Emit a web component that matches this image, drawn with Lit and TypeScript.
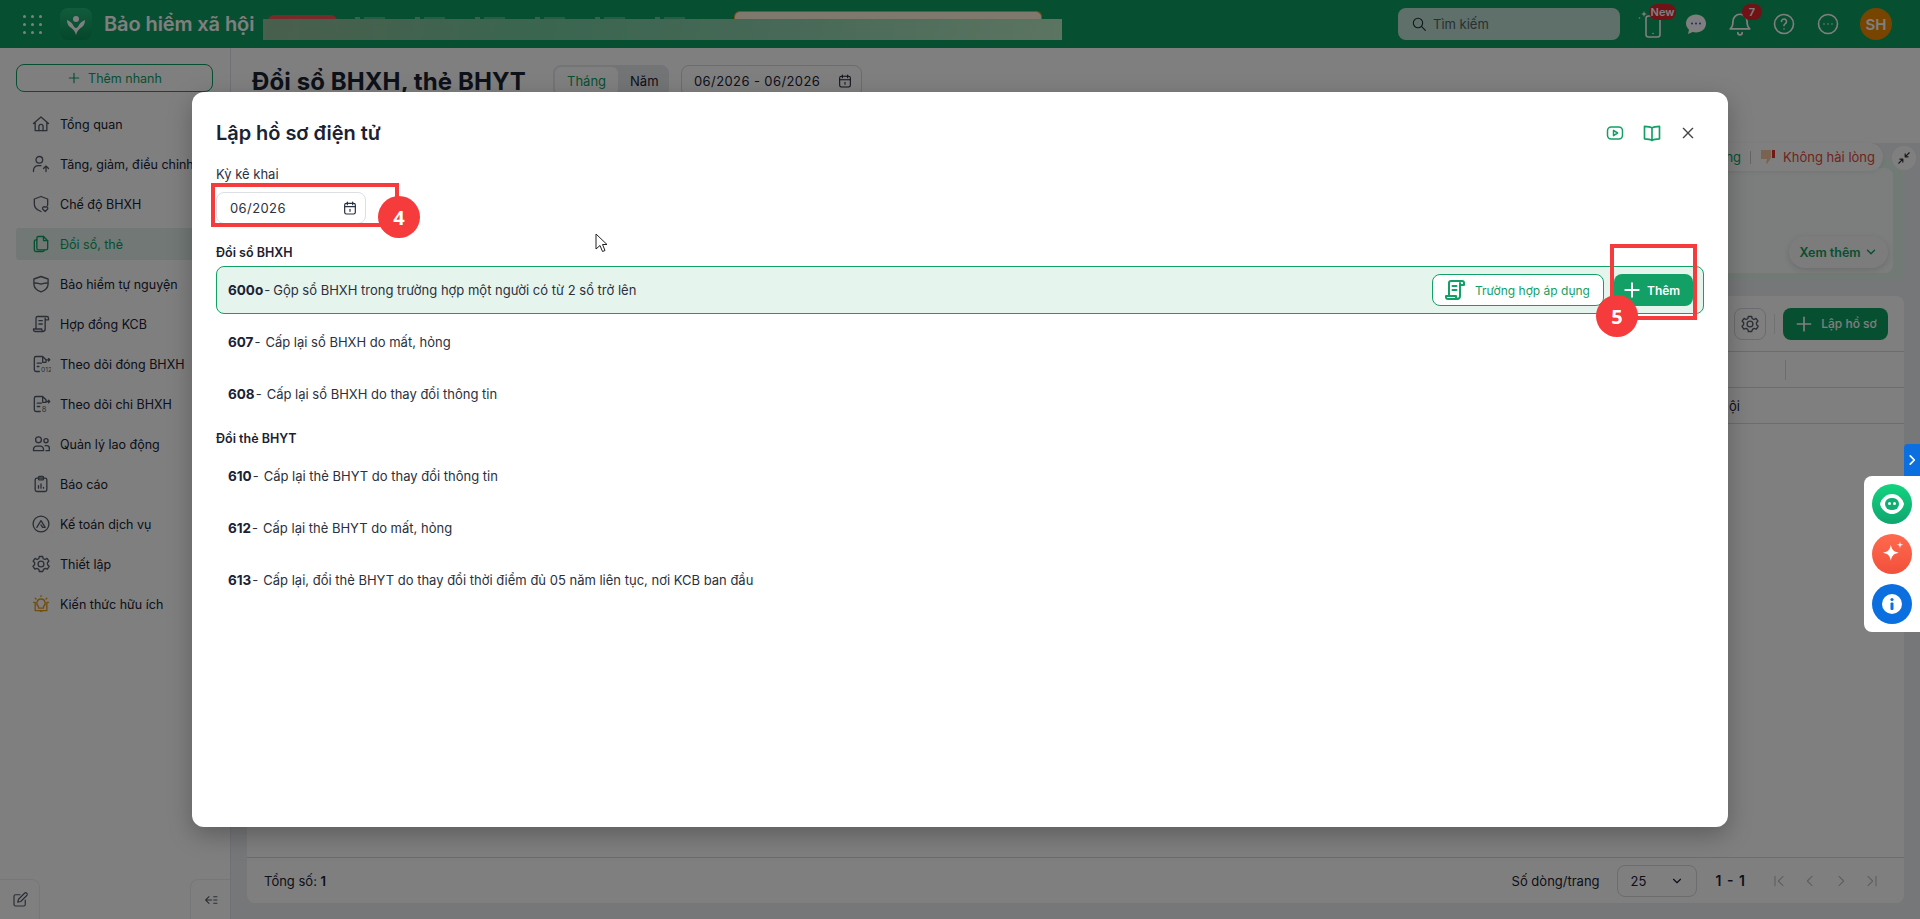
import { LitElement, html, css, svg } from 'lit';
import { customElement } from 'lit/decorators.js';

const i = (body: unknown, size = 20, vb = 24, sw = 1.6) => html`<svg width=${size} height=${size} viewBox="0 0 ${vb} ${vb}" fill="none" stroke="currentColor" stroke-width=${sw} stroke-linecap="round" stroke-linejoin="round">${body}</svg>`;

const gearPath = svg`<circle cx="12" cy="12" r="3.5"/><path d="M10 3h4l.6 2.6 2.3 1 2.3-1.300 2.4 3.200-1.900 2 .2 2.500 1.900 1.800-2.200 3.400-2.500-1-2.100 1.300L14 21h-4l-.6-2.500-2.300-1.300-2.500 1L2.400 14.800l1.900-1.800.1-2.500-1.900-2 2.400-3.200 2.300 1.300 2.200-1z"/>`;
const scroll = svg`<path d="M8 3h11a2 2 0 0 1 2 2v2h-4M17 5v13a3 3 0 0 1-3 3H5a2 2 0 0 1-2-2v-1h10v1a2 2 0 0 0 2 2M6 18V5a2 2 0 0 1 2-2M9.5 8h4M9.5 12h4"/>`;

const menu = [
  ['Tổng quan', svg`<path d="M3 11.5 12 3.5l9 8M5 10v10h14V10"/><path d="M9.5 20v-5a2.5 2.5 0 0 1 5 0v5"/>`],
  ['Tăng, giảm, điều chỉnh', svg`<circle cx="10" cy="7" r="4"/><path d="M3 21v-2a6 6 0 0 1 6-5h3M18 21v-6M15 17.500l3-3 3 3"/>`],
  ['Chế độ BHXH', svg`<path d="M12 3l8 3v6c0 .8-.1 1.500-.3 2M12 21c-4-1.500-8-4.500-8-9V6l8-3"/><path d="M17 21l-3-3a1.900 1.900 0 0 1 3-2.200 1.900 1.900 0 0 1 3 2.200z"/>`],
  ['Đổi sổ, thẻ', svg`<path d="M9 3h6l5 5v9a2 2 0 0 1-2 2H9a2 2 0 0 1-2-2V5a2 2 0 0 1 2-2z"/><path d="M15 3v5h5M7 7H6a2 2 0 0 0-2 2v10a2 2 0 0 0 2 2h8a2 2 0 0 0 2-2"/>`],
  ['Bảo hiểm tự nguyện', svg`<path d="M12 3l8.500 3v6c0 5-4 8-8.500 9.500C7.500 20 3.500 17 3.500 12V6z"/><path d="M4 11c3-1 5 1 8 1s5-2 8-1"/>`],
  ['Hợp đồng KCB', scroll],
  ['Theo dõi đóng BHXH', svg`<path d="M14 3H6a2 2 0 0 0-2 2v14a2 2 0 0 0 2 2h4M14 3l4 4v3h-4zM7.5 11h5M7.5 15h2M19 7h3M21 5.500 22.500 7 21 8.500"/><text x="12" y="22" font-size="8" font-family="Inter" fill="currentColor" stroke="none">012</text>`],
  ['Theo dõi chi BHXH', svg`<path d="M14 3H6a2 2 0 0 0-2 2v14a2 2 0 0 0 2 2h5M14 3l4 4v3h-4zM7.5 11h5M7.5 15h3M19 9h3M21 7.500 22.500 9 21 10.500"/><text x="13" y="22" font-size="9" font-family="Inter" fill="currentColor" stroke="none">8</text>`],
  ['Quản lý lao động', svg`<circle cx="9" cy="7" r="3.5"/><circle cx="18" cy="8" r="2.5"/><path d="M3 20v-2a4 4 0 0 1 4-3.500h4a4 4 0 0 1 4 3.500v2zM17 14h2a3 3 0 0 1 3 3v3h-4"/>`],
  ['Báo cáo', svg`<rect x="5" y="5" width="14" height="16" rx="2"/><rect x="9" y="3" width="6" height="4" rx="1"/><path d="M9 17v-3M12 17v-5M15 17v-1"/>`],
  ['Kế toán dịch vụ', svg`<circle cx="12" cy="12" r="9.5"/><path d="M7 16l5-8 5 8h-3l-2-3"/>`],
  ['Thiết lập', gearPath],
  ['Kiến thức hữu ích', svg`<path d="M12 6a5 5 0 0 1 3 9v2H9v-2a5 5 0 0 1 3-9zM10 20h4M12 2v1M5 5l1 1M19 5l-1 1M3 10h2v10h5l2 1 2-1h5V10h2"/>`],
] as const;

const section1 = [
  ['600o', 'Gộp sổ BHXH trong trường hợp một người có từ 2 sổ trở lên'],
  ['607', 'Cấp lại sổ BHXH do mất, hỏng'],
  ['608', 'Cấp lại sổ BHXH do thay đổi thông tin'],
];
const section2 = [
  ['610', 'Cấp lại thẻ BHYT do thay đổi thông tin'],
  ['612', 'Cấp lại thẻ BHYT do mất, hỏng'],
  ['613', 'Cấp lại, đổi thẻ BHYT do thay đổi thời điểm đủ 05 năm liên tục, nơi KCB ban đầu'],
];

const calendar = svg`<rect x="4" y="5" width="16" height="16" rx="2.5"/><path d="M4 10h16M8 3v4M16 3v4M12 14v3"/>`;
const plus = svg`<path d="M12 4v16M4 12h16"/>`;

@customElement('app-root')
export class AppRoot extends LitElement {
  static styles = css`
    :host { display: block; width: 1920px; height: 919px; position: relative; overflow: hidden; font-family: Inter, "Noto Sans", sans-serif; color: #1a2233; background: #fff; }
    * { box-sizing: border-box; }
    svg { flex: none; display: block; }

    .page { display: grid; grid-template-rows: 48px 1fr; height: 100%; }
    .top { background: #0f9e63; display: flex; align-items: center; padding: 0 28px 0 23px; color: #fff; position: relative; }
    .dots { display: grid; grid-template-columns: repeat(3, 3px); gap: 5px 5px; margin-right: 18px; }
    .dots i { width: 3px; height: 3px; background: #fff; border-radius: 50%; }
    .logo { width: 32px; height: 32px; border-radius: 8px; background: linear-gradient(#23b878, #0a8e58); display: flex; align-items: center; justify-content: center; margin-right: 12px; }
    .brand { font-size: 20px; font-weight: 600; letter-spacing: -.1px; white-space: nowrap; }
    .redact { position: absolute; left: 263px; top: 19px; width: 799px; height: 21px; background: linear-gradient(100deg, #94be9c, #74cca0 35%, #8fd2ae 65%, #b8eac4); }
    .peek-red { position: absolute; left: 268px; top: 15px; width: 69px; height: 8px; background: #f45454; border-radius: 6px 6px 0 0; }
    .peek-box { position: absolute; left: 734px; top: 11px; width: 308px; height: 12px; background: #fff0d8; border: 1px solid #f0a030; border-bottom: 0; border-radius: 6px 6px 0 0; }
    .peek-text { position: absolute; left: 355px; top: 17px; width: 345px; height: 2px; background: repeating-linear-gradient(90deg, #fff6 0 5px, #0000 5px 9px, #fff4 9px 30px, #0000 30px 60px); }
    .search { margin-left: auto; width: 222px; height: 32px; border-radius: 8px; background: #bedfd4; color: #52615f; display: flex; align-items: center; gap: 6px; padding: 0 13px; font-size: 13px; }
    .search svg { color: #1f2933; }
    .tools { display: flex; align-items: center; margin-left: 10px; }
    .tool { position: relative; display: flex; justify-content: center; width: 44px; color: #fff; }
    .badge { position: absolute; height: 16px; border-radius: 8px; background: #e0242c; color: #fff; font-size: 11px; font-weight: 600; display: flex; align-items: center; justify-content: center; }
    .badge.new { width: 27px; left: 19px; top: -5px; }
    .badge.count { width: 20px; left: 24px; top: -7px; }
    .avatar { width: 32px; height: 32px; border-radius: 50%; background: #f08a00; font-size: 15px; font-weight: 600; display: flex; align-items: center; justify-content: center; margin-left: 10px; }

    .body { display: grid; grid-template-columns: 231px 1fr; min-height: 0; }
    .side { border-right: 1px solid #dfe3e8; background: #fff; padding: 16px 16px 0; display: flex; flex-direction: column; position: relative; }
    .quick { height: 28px; width: 197px; border: 1px solid #0f9e63; border-radius: 8px; color: #0f9e63; font-size: 12.5px; display: flex; align-items: center; justify-content: center; gap: 7px; margin-bottom: 12px; }
    .item { height: 40px; display: flex; align-items: center; padding-left: 15px; gap: 9px; font-size: 12.5px; white-space: nowrap; color: #1a2233; }
    .item svg { color: #555e6b; }
    .item.on { color: #0f9e63; background: linear-gradient(#0000 4px, #e2f1ea 4px, #e2f1ea 36px, #0000 36px); border-radius: 8px; }
    .item.on svg { color: #0f9e63; }
    .item.warm svg { color: #e39b1c; }
    .side-foot { margin: auto -16px 0; display: flex; justify-content: space-between; height: 40px; color: #555e6b; }
    .foot-btn { width: 40px; display: flex; align-items: center; justify-content: center; border: 1px solid #eceff2; border-bottom: 0; }
    .foot-btn.l { border-left: 0; border-top-right-radius: 8px; }
    .foot-btn.r { border-right: 0; border-top-left-radius: 8px; }

    .main { padding: 16px; display: flex; flex-direction: column; min-width: 0; background: linear-gradient(#fff 95px, #eceff3 95px); }
    .title-row { height: 34px; display: flex; align-items: center; padding-left: 5px; margin-bottom: 62px; }
    h1 { margin: 0; font-size: 24px; font-weight: 700; white-space: nowrap; letter-spacing: .1px; width: 301px; }
    .seg { display: flex; width: 116px; background: #e6e8ec; border-radius: 8px; padding: 2px; font-size: 13px; margin-right: 12px; }
    .seg span { padding: 0 12px; height: 28px; display: flex; align-items: center; }
    .seg .act { background: #fff; border-radius: 6px; color: #0f9e63; }
    .date { width: 181px; height: 32px; border: 1px solid #d5d8dd; border-radius: 8px; display: flex; align-items: center; justify-content: space-between; padding: 0 8px 0 12px; font-size: 13px; letter-spacing: .4px; }
    .feedback { height: 120px; margin-bottom: 16px; position: relative; background: #e2f5ea; border-radius: 8px; display: flex; padding: 8px 11px 7px 0; }
    .fb-inner { flex: 1; background: #f8fbfa; border-radius: 8px; }
    .xem { position: absolute; right: 16px; bottom: 12px; width: 99px; height: 32px; border-radius: 16px; background: #f6f8f7; box-shadow: 0 2px 6px #0002; color: #0f9e63; font-size: 12.5px; font-weight: 600; display: flex; align-items: center; justify-content: center; gap: 3px; }
    .vote { position: absolute; right: 21px; top: -17px; height: 28px; width: 300px; border-radius: 14px; background: #fff; box-shadow: 0 1px 4px #0001; display: flex; align-items: center; justify-content: flex-end; gap: 7px; padding-right: 8px; font-size: 13px; color: #e0483a; white-space: nowrap; }
    .vote em { font-style: normal; color: #0f9e63; }
    .vote i { width: 1px; height: 13px; background: #c5cbc9; margin: 0 2px; }
    .shrink { position: absolute; right: -12px; top: -14px; width: 24px; height: 24px; border-radius: 50%; background: #fff; display: flex; align-items: center; justify-content: center; color: #333; }

    .card { flex: 1; background: #fff; border-radius: 8px; display: flex; flex-direction: column; min-height: 0; }
    .card-bar { height: 56px; display: flex; align-items: center; justify-content: flex-end; padding: 0 16px; gap: 8px; border-bottom: 1px solid #d5d8dd; }
    .gear { width: 32px; height: 32px; border: 1px solid #d5d8dd; border-radius: 8px; display: flex; align-items: center; justify-content: center; color: #555e6b; }
    .vsep { width: 1px; height: 20px; background: #e2e5e9; }
    .make { width: 105px; height: 32px; border-radius: 8px; background: #0f9e63; color: #fff; font-size: 12px; font-weight: 500; display: flex; align-items: center; justify-content: center; gap: 7px; }
    .thead { height: 36px; border-bottom: 1px solid #d5d8dd; display: flex; justify-content: flex-end; align-items: center; padding-right: 118px; }
    .thead i { width: 1px; height: 20px; background: #d5d8dd; }
    .trow { height: 36px; border-bottom: 1px solid #d5d8dd; display: flex; align-items: center; justify-content: flex-end; padding-right: 164px; font-size: 13px; }
    .spacer { flex: 1; }
    .card-foot { height: 46px; border-top: 1px solid #d5d8dd; display: flex; align-items: center; padding: 0 16px 0 17px; font-size: 13px; }
    .card-foot b { font-weight: 600; }
    .range { word-spacing: 2px; font-size: 14px; }
    .rows-lbl { margin-left: auto; margin-right: 17px; }
    .sel { width: 80px; height: 32px; border: 1px solid #d5d8dd; border-radius: 8px; display: flex; align-items: center; justify-content: space-between; padding: 0 12px 0 13px; margin-right: 19px; }
    .pager { display: flex; gap: 15px; margin-left: 26px; color: #b7bcc4; margin-right: 8px; }

    .scrim { position: absolute; inset: 0; background: rgba(0, 0, 0, .5); }
    .modal { position: absolute; left: 192px; top: 92px; width: 1536px; height: 735px; background: #fff; border-radius: 12px; padding: 25px 24px 24px; box-shadow: 0 8px 24px #0004; display: flex; flex-direction: column; }
    .m-head { display: flex; align-items: center; height: 32px; margin-bottom: 16px; }
    .m-head h2 { margin: 0; font-size: 20px; font-weight: 600; letter-spacing: -.05px; }
    .m-acts { margin-left: auto; display: flex; align-items: center; gap: 18px; padding-right: 8px; color: #12a066; }
    .m-acts .x { color: #444; }
    .lbl { font-size: 13px; line-height: 18px; color: #2a3140; margin-bottom: 9px; }
    .input { width: 150px; height: 32px; border: 1px solid #dcdfe3; border-radius: 8px; display: flex; align-items: center; justify-content: space-between; padding: 0 7px 0 13px; font-size: 13px; letter-spacing: .4px; color: #2a3140; margin-bottom: 20px; }
    .sec { font-size: 12.5px; font-weight: 600; line-height: 18px; margin-bottom: 4px; color: #1a2233; }
    .list { display: flex; flex-direction: column; gap: 4px; margin-bottom: 12px; }
    .row { height: 48px; display: flex; align-items: center; padding: 0 10px 0 11px; font-size: 13px; color: #2a3140; border: 1px solid transparent; border-radius: 8px; white-space: nowrap; }
    .row b { font-weight: 700; color: #1a2233; margin-right: 1px; font-size: 13.5px; }
    .row .desc { margin-left: 5px; }
    .row.on { background: #e6f4ee; border-color: #12a066; }
    .row.on .desc { margin-left: 3px; }
    .row-acts { margin-left: auto; display: flex; gap: 10px; }
    .case { width: 172px; height: 32px; background: #fff; border: 1px solid #12a066; border-radius: 8px; color: #12a066; display: flex; align-items: center; padding-left: 10px; gap: 8px; font-size: 12px; }
    .add { width: 79px; height: 32px; background: #12a066; color: #fff; border-radius: 8px; display: flex; align-items: center; padding-left: 8px; gap: 5px; font-size: 12px; font-weight: 600; }

    .dock { position: absolute; right: 0; top: 476px; width: 56px; height: 156px; background: #fff; border-radius: 8px 0 0 8px; padding: 8px; display: flex; flex-direction: column; gap: 10px; }
    .dock div { width: 40px; height: 40px; border-radius: 50%; display: flex; align-items: center; justify-content: center; }
    .dock .a { background: linear-gradient(#12d47f, #10a56f); }
    .dock .b { background: linear-gradient(#ff6a4d, #f2503c); }
    .dock .c { background: #0b6fe0; }
    .tab { position: absolute; right: 0; top: 444px; width: 16px; height: 32px; background: #0b6fe0; border-radius: 4px 0 0 0; color: #fff; display: flex; align-items: center; justify-content: center; }

    .mark { position: absolute; border: 4px solid #f53b3b; }
    .m4 { left: 211px; top: 183px; width: 188px; height: 44px; }
    .m5 { left: 1610px; top: 244px; width: 87px; height: 76px; }
    .num { position: absolute; width: 42px; height: 42px; border-radius: 50%; background: #f53b3b; color: #fff; font-size: 20px; font-weight: 700; font-family: "Open Sans", sans-serif; display: flex; align-items: center; justify-content: center; }
    .n4 { left: 378px; top: 196px; }
    .n5 { left: 1596px; top: 295px; }
    .cursor { position: absolute; left: 595px; top: 233px; }
  `;

  render() {
    return html`
      <div class="page">
        <header class="top">
          <div class="dots">${Array.from({ length: 9 }, () => html`<i></i>`)}</div>
          <div class="logo">
            <svg width="22" height="24" viewBox="0 0 22 24" fill="#fff"><circle cx="11" cy="7" r="3"/><path d="M11 23c-1-4-3-6-6-8-2-1.500-3-4-3-7 3 1 5 3 6 5 1 2 2 3 3 3s2-1 3-3c1-2 3-4 6-5 0 3-1 5.500-3 7-3 2-5 4-6 8z"/></svg>
          </div>
          <div class="brand">Bảo hiểm xã hội</div>
          <div class="peek-red"></div>
          <div class="peek-text"></div>
          <div class="peek-box"></div>
          <div class="redact"></div>
          <div class="search">${i(svg`<circle cx="10.5" cy="10.5" r="7"/><path d="m16 16 5.5 5.5"/>`, 16)}<span>Tìm kiếm</span></div>
          <div class="tools">
            <div class="tool">
              <svg width="30" height="30" viewBox="0 0 30 30" fill="none" stroke="currentColor" stroke-width="1.6" stroke-linecap="round" stroke-linejoin="round"><rect x="9" y="7" width="14" height="21" rx="2.5"/><path d="M16 24.5h.01"/><path d="M7 2l.8 2.200L10 5l-2.200.8L7 8l-.8-2.200L4 5l2.200-.8z" fill="currentColor" stroke="none"/><path d="M2.500 9h.01"/></svg>
              <span class="badge new">New</span>
            </div>
            <div class="tool">
              <svg width="24" height="24" viewBox="0 0 24 24" fill="#fff"><path d="M12 2.5c5.500 0 10 3.800 10 9s-4.500 9-10 9c-1.200 0-2.300-.2-3.300-.5L4 22l1-4.300C3.200 16 2 13.900 2 11.500c0-5.200 4.500-9 10-9z"/><g fill="#3355ee"><circle cx="8" cy="11.5" r="1"/><circle cx="12" cy="11.5" r="1"/><circle cx="16" cy="11.5" r="1"/></g></svg>
            </div>
            <div class="tool">
              ${i(svg`<path d="M12 3a6.500 6.500 0 0 1 6.500 6.500c0 5 2.500 7 2.500 7H3s2.500-2 2.500-7A6.500 6.500 0 0 1 12 3zM10 20a2 2 0 0 0 4 0"/>`, 26)}
              <span class="badge count">7</span>
            </div>
            <div class="tool">${i(svg`<circle cx="12" cy="12" r="9.5"/><path d="M9.5 9.5a2.500 2.500 0 1 1 3.800 2.100c-.8.500-1.300 1.100-1.300 2M12 17h.01"/>`, 24)}</div>
            <div class="tool">${i(svg`<circle cx="12" cy="12" r="9.5"/><path d="M8 12h.01M12 12h.01M16 12h.01"/>`, 24)}</div>
            <div class="avatar">SH</div>
          </div>
        </header>
        <div class="body">
          <aside class="side">
            <div class="quick">${i(plus, 14, 24, 2)}Thêm nhanh</div>
            ${menu.map(([name, ic], idx) => html`
              <div class="item ${idx === 3 ? 'on' : ''} ${idx === 12 ? 'warm' : ''}">${i(ic, 20)}<span>${name}</span></div>
            `)}
            <div class="side-foot">
              <div class="foot-btn l">${i(svg`<path d="M12 5H6a2 2 0 0 0-2 2v11a2 2 0 0 0 2 2h11a2 2 0 0 0 2-2v-6M9 15l1-4 8-8a2 2 0 0 1 3 3l-8 8z"/>`, 18)}</div>
              <div class="foot-btn r">${i(svg`<path d="M9 7l-5 5 5 5M4 12h9M16 7h5M16 12h5M16 17h5"/>`, 16)}</div>
            </div>
          </aside>
          <main class="main">
            <div class="title-row">
              <h1>Đổi sổ BHXH, thẻ BHYT</h1>
              <div class="seg"><span class="act">Tháng</span><span>Năm</span></div>
              <div class="date">06/2026 - 06/2026 ${i(calendar, 16)}</div>
            </div>
            <div class="feedback">
              <div class="fb-inner"></div>
              <div class="vote">
                <em>Hài lòng</em><i></i>
                <svg width="16" height="16" viewBox="0 0 16 16"><path d="M1 1h10v8l-4 6-1-1 1-4H1z" fill="#f6c7a4"/><rect x="12" y="1" width="3" height="8" fill="#e0342c"/></svg>
                Không hài lòng
              </div>
              <div class="shrink">${i(svg`<path d="M21 3l-7 7M14 5v5h5M3 21l7-7M5 14h5v5"/>`, 14, 24, 2)}</div>
              <div class="xem">Xem thêm ${i(svg`<path d="m6 9 6 6 6-6"/>`, 14, 24, 2.4)}</div>
            </div>
            <section class="card">
              <div class="card-bar">
                <div class="gear">${i(gearPath, 20)}</div>
                <div class="vsep"></div>
                <div class="make">${i(plus, 20, 24, 2)}Lập hồ sơ</div>
              </div>
              <div class="thead"><i></i></div>
              <div class="trow">ội</div>
              <div class="spacer"></div>
              <div class="card-foot">
                <span>Tổng số: <b>1</b></span>
                <span class="rows-lbl">Số dòng/trang</span>
                <div class="sel">25 ${i(svg`<path d="m6 9 6 6 6-6"/>`, 14, 24, 2)}</div>
                <b class="range">1 - 1</b>
                <div class="pager">
                  ${i(svg`<path d="M6 5v14M18 5l-7 7 7 7"/>`, 16)}
                  ${i(svg`<path d="m15 5-7 7 7 7"/>`, 16)}
                  ${i(svg`<path d="m9 5 7 7-7 7"/>`, 16)}
                  ${i(svg`<path d="M18 5v14M6 5l7 7-7 7"/>`, 16)}
                </div>
              </div>
            </section>
          </main>
        </div>
      </div>

      <div class="scrim"></div>

      <div class="tab">${i(svg`<path d="m9 5 7 7-7 7"/>`, 14, 24, 3)}</div>
      <div class="dock">
        <div class="a"><svg width="30" height="30" viewBox="0 0 30 30"><path d="M15 5c6 0 11 5 12 10-1 5-6 10-12 10-6 0-11-5-12-10C4 10 9 5 15 5z" fill="#fff"/><rect x="8" y="9" width="14" height="12" rx="6" fill="#10ad72"/><circle cx="12.5" cy="14.5" r="1.5" fill="#fff"/><circle cx="17.5" cy="14.5" r="1.5" fill="#fff"/></svg></div>
        <div class="b"><svg width="32" height="32" viewBox="0 0 28 28" fill="#fff"><path d="M13 6c.8 4.500 2.500 6.200 7 7-4.500.8-6.200 2.500-7 7-.8-4.500-2.500-6.200-7-7 4.500-.8 6.200-2.500 7-7z"/><path d="M21 3l.6 2.400L24 6l-2.400.6L21 9l-.6-2.400L18 6l2.400-.6z"/></svg></div>
        <div class="c"><svg width="24" height="24" viewBox="0 0 24 24"><circle cx="12" cy="12" r="10" fill="#fff"/><circle cx="12" cy="7.5" r="1.600" fill="#0b6fe0"/><rect x="10.5" y="10.5" width="3" height="7.500" rx="1" fill="#0b6fe0"/></svg></div>
      </div>

      <div class="modal">
        <div class="m-head">
          <h2>Lập hồ sơ điện tử</h2>
          <div class="m-acts">
            ${i(svg`<rect x="2" y="4" width="20" height="16" rx="5"/><path d="M10 8.5v7l5.500-3.500z"/>`, 18, 24, 2)}
            ${i(svg`<path d="M12 6c-2-1.500-5-2-9-2v15c4 0 7 .5 9 2 2-1.500 5-2 9-2V4c-4 0-7 .5-9 2zM12 6v15"/>`, 20, 24, 2)}
            <span class="x">${i(svg`<path d="M5 5l14 14M19 5 5 19"/>`, 16, 24, 2)}</span>
          </div>
        </div>
        <div class="lbl">Kỳ kê khai</div>
        <div class="input">06/2026 ${i(calendar, 16, 24, 1.8)}</div>
        <div class="sec">Đổi sổ BHXH</div>
        <div class="list">
          ${section1.map(([code, text], idx) => html`
            <div class="row ${idx === 0 ? 'on' : ''}">
              <b>${code}</b>-<span class="desc">${text}</span>
              ${idx === 0 ? html`
                <div class="row-acts">
                  <div class="case">${i(scroll, 24, 24, 2)}Trường hợp áp dụng</div>
                  <div class="add">${i(plus, 20, 24, 2.4)}Thêm</div>
                </div>` : ''}
            </div>
          `)}
        </div>
        <div class="sec">Đổi thẻ BHYT</div>
        <div class="list">
          ${section2.map(([code, text]) => html`<div class="row"><b>${code}</b>-<span class="desc">${text}</span></div>`)}
        </div>
      </div>

      <div class="mark m4"></div>
      <div class="mark m5"></div>
      <div class="num n4">4</div>
      <div class="num n5">5</div>
      <svg class="cursor" width="13" height="20" viewBox="0 0 13 20"><path d="M1 1v15l4-3.500 2.500 6 2.500-1-2.500-6H12z" fill="#fff" stroke="#222" stroke-width="1"/></svg>
    `;
  }
}
